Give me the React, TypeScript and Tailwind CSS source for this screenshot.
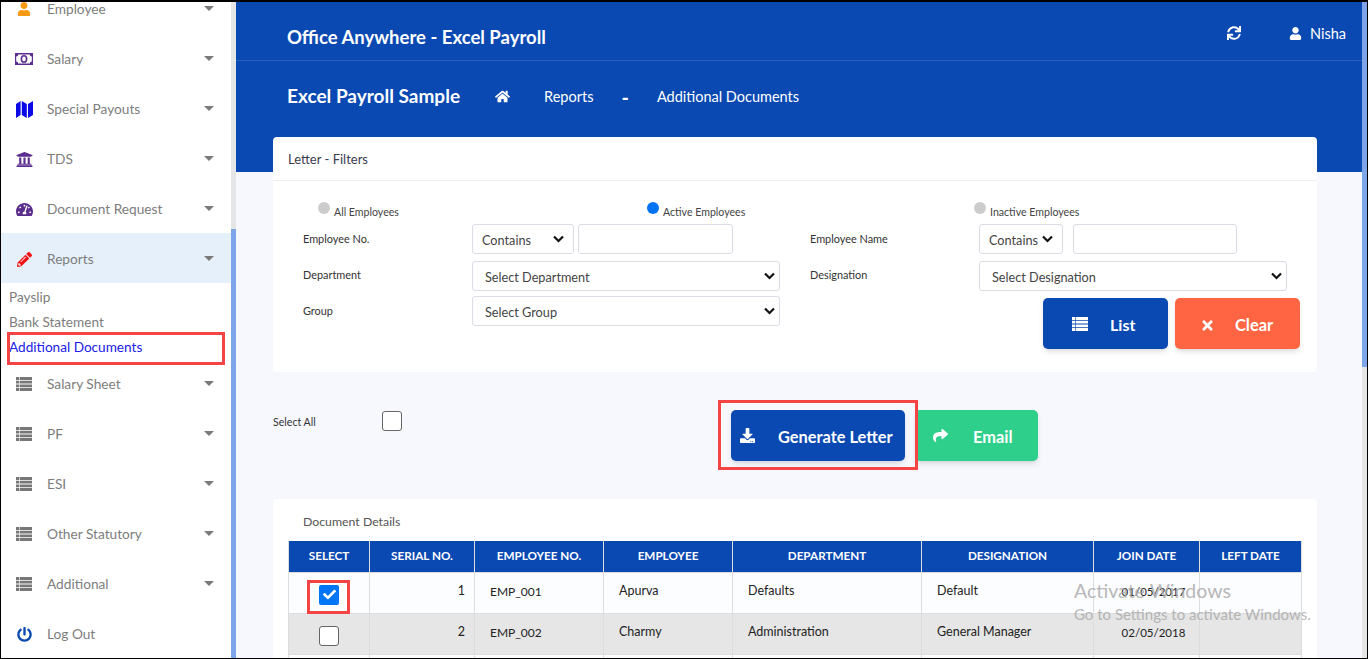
import { FaUser, FaUniversity, FaTachometerAlt, FaPencilAlt, FaPowerOff, FaHome, FaSync, FaTimes, FaDownload, FaShare, FaCheck } from 'react-icons/fa';
import type { ReactNode } from 'react';

function ListIcon({ className }: { className?: string }) {
  return (
    <svg className={className} viewBox="0 0 16 14" fill="currentColor" aria-hidden>
      <path d="M0 0h3.4v2.9H0zM4 0h12v2.9H4zM0 3.7h3.4v2.9H0zM4 3.7h12v2.9H4zM0 7.4h3.4v2.9H0zM4 7.4h12v2.9H4zM0 11.1h3.4V14H0zM4 11.1h12V14H4z" />
    </svg>
  );
}

function MoneyIcon() {
  return (
    <svg className="h-[12px] w-[18px] text-[#5b2d8e]" viewBox="0 0 18 12" aria-hidden>
      <path fill="currentColor" d="M0 0h18v12H0z" />
      <path fill="#fff" d="M3.2 1.6h11.6a2 2 0 002 2v4.8a2 2 0 00-2 2H3.2a2 2 0 00-2-2V3.6a2 2 0 002-2z" />
      <ellipse cx="9" cy="6" rx="2.6" ry="3.2" fill="none" stroke="currentColor" strokeWidth="1.6" />
    </svg>
  );
}

function MapIcon() {
  return (
    <svg className="h-[17px] w-[17px] text-[#0a0ae6]" viewBox="0 0 17 17" fill="currentColor" aria-hidden>
      <path d="M0 3l4.6-3v14L0 17zM5.8 0l5 3v14l-5-3zM12 3l5-3v14l-5 3z" />
    </svg>
  );
}

function NavItem({ icon, label, active, noCaret }: { icon: ReactNode; label: string; active?: boolean; noCaret?: boolean }) {
  return (
    <div className={`flex h-[50px] shrink-0 items-center ${active ? 'mt-[-1px] bg-[#e6f0fb] pt-[2px]' : ''}`}>
      <span className="flex w-[46px] shrink-0 justify-center text-[17px]">{icon}</span>
      <span className="text-[13.7px] text-[#7d7d7d]">{label}</span>
      {!noCaret && <span className="ml-auto mr-[17px] mb-[1px] h-0 w-0 border-x-[5px] border-t-[5px] border-x-transparent border-t-[#7a7a7a]" />}
    </div>
  );
}

const listIcon = <ListIcon className="w-[16px] text-[#777777]" />;

function Select({ label, className }: { label: string; className: string }) {
  return (
    <div className={`flex h-[30px] shrink-0 items-center justify-between rounded-[3px] border border-[#dcdce6] bg-white text-[12.7px] text-[#444444] ${className}`}>
      <span className="pt-[3px]">{label}</span>
      <svg className="h-[8px] w-[11px]" viewBox="0 0 11 8" fill="none" stroke="#111111" strokeWidth="2.2" aria-hidden><path d="M1 1.5l4.5 4.5L10 1.5" /></svg>
    </div>
  );
}

function Radio({ label, on, className }: { label: string; on?: boolean; className: string }) {
  return (
    <div className={`flex shrink-0 items-start gap-[4px] text-[10.6px] text-[#444444] ${className}`}>
      <span className={`h-[12px] w-[12px] rounded-full ${on ? 'bg-[#0073f5]' : 'bg-[#cccccc]'}`} />
      <span className="mt-[3px] leading-[14px]">{label}</span>
    </div>
  );
}

function FilterLabel({ text, className }: { text: string; className: string }) {
  return <div className={`shrink-0 text-[10.9px] text-[#333333] ${className}`}>{text}</div>;
}

const headers = [
  ['SELECT', 'w-[81px]'],
  ['SERIAL NO.', 'w-[105px]'],
  ['EMPLOYEE NO.', 'w-[129px]'],
  ['EMPLOYEE', 'w-[129px]'],
  ['DEPARTMENT', 'w-[189px]'],
  ['DESIGNATION', 'w-[172px]'],
  ['JOIN DATE', 'w-[106px]'],
  ['LEFT DATE', 'w-[102px]'],
];

const rows = [
  { serial: '1', no: 'EMP_001', name: 'Apurva', dept: 'Defaults', desig: 'Default', join: '01/05/2017', checked: true },
  { serial: '2', no: 'EMP_002', name: 'Charmy', dept: 'Administration', desig: 'General Manager', join: '02/05/2018', checked: false },
];

export default function App() {
  return (
    <div className="flex h-[659px] w-[1368px] overflow-hidden border-t-2 border-r border-b border-l border-black bg-[#f7f8fe] font-['Lato','Noto_Sans',sans-serif]">
      {/* sidebar */}
      <aside className="flex w-[235px] shrink-0 bg-white">
        <div className="relative h-full w-[230px] shrink-0 overflow-hidden">
          <div className="mt-[-18px] flex flex-col">
            <NavItem icon={<FaUser className="text-[14px] text-[#f59a12]" />} label="Employee" />
            <NavItem icon={<MoneyIcon />} label="Salary" />
            <NavItem icon={<MapIcon />} label="Special Payouts" />
            <NavItem icon={<FaUniversity className="text-[#5b2d8e]" />} label="TDS" />
            <NavItem icon={<FaTachometerAlt className="text-[#5b2d8e]" />} label="Document Request" />
            <NavItem icon={<FaPencilAlt className="text-[15px] text-[#f01414]" />} label="Reports" active />
            <div className="mb-[-1px] flex flex-col pl-[8px] pt-[2px] text-[13.6px] leading-[25px] text-[#7d7d7d]">
              <span>Payslip</span>
              <span>Bank Statement</span>
              <span className="relative text-[#2020e8]">
                Additional Documents
                <span className="absolute left-[-2px] top-[-3px] h-[33px] w-[218px] border-[3px] border-[#f44444]" />
              </span>
            </div>
            <NavItem icon={listIcon} label="Salary Sheet" />
            <NavItem icon={listIcon} label="PF" />
            <NavItem icon={listIcon} label="ESI" />
            <NavItem icon={listIcon} label="Other Statutory" />
            <NavItem icon={listIcon} label="Additional" />
            <NavItem icon={<FaPowerOff className="text-[15px] text-[#0a4ab0]" />} label="Log Out" noCaret />
          </div>
        </div>
        <div className="flex w-[5px] shrink-0 flex-col">
          <div className="h-[227px] bg-[#e6e6e6]" />
          <div className="flex-1 bg-[#7da5e8]" />
        </div>
      </aside>

      {/* main */}
      <main className="relative flex min-w-0 flex-1 flex-col overflow-hidden">
        <header className="h-[170px] shrink-0 bg-[#0a49b2] text-white">
          <div className="flex h-[59px] items-center border-b border-[#2a63b5] pl-[51px] pr-[16px]">
            <span className="mt-[14px] text-[18.5px] font-bold">Office Anywhere - Excel Payroll</span>
            <FaSync className="ml-auto mt-[4px] text-[14px]" />
            <FaUser className="ml-[48px] mt-[4px] text-[13px]" />
            <span className="ml-[8px] mt-[6px] text-[14.5px]">Nisha</span>
          </div>
          <div className="flex h-[71px] items-center pl-[51px]">
            <span className="text-[19px] font-bold">Excel Payroll Sample</span>
            <FaHome className="ml-[35px] text-[15px]" />
            <span className="ml-[34px] text-[14.5px]">Reports</span>
            <span className="ml-[28px] text-[20px] font-bold leading-none">-</span>
            <span className="ml-[28px] text-[14.5px]">Additional Documents</span>
          </div>
        </header>

        <div className="mt-[-35px] flex flex-col pl-[37px]">
          {/* filters card */}
          <section className="h-[235px] w-[1044px] rounded-[4px] bg-white">
            <div className="flex h-[44px] items-center border-b border-[#eeeeee] pl-[15px] pt-[3px] text-[13px] text-[#3c3c50]">Letter - Filters</div>
            <div className="flex h-[191px] flex-col px-[30px] pt-[21px]">
              <div className="flex h-[22px]">
                <Radio label="All Employees" className="w-[344px] pl-[15px]" />
                <Radio label="Active Employees" on className="w-[327px]" />
                <Radio label="Inactive Employees" className="" />
              </div>
              <div className="flex h-[30px] items-start">
                <FilterLabel text="Employee No." className="w-[169px] pt-[7px]" />
                <Select label="Contains" className="w-[102px] px-[9px]" />
                <div className="ml-[4px] h-[30px] w-[155px] shrink-0 rounded-[3px] border border-[#dcdce6] bg-white" />
                <FilterLabel text="Employee Name" className="ml-[77px] w-[169px] pt-[7px]" />
                <Select label="Contains" className="w-[84px] px-[9px]" />
                <div className="ml-[10px] h-[30px] w-[164px] shrink-0 rounded-[3px] border border-[#dcdce6] bg-white" />
              </div>
              <div className="mt-[7px] flex h-[30px] items-start">
                <FilterLabel text="Department" className="w-[169px] pt-[6px]" />
                <Select label="Select Department" className="w-[308px] pl-[12px] pr-[4px]" />
                <FilterLabel text="Designation" className="ml-[30px] w-[169px] pt-[6px]" />
                <Select label="Select Designation" className="w-[308px] pl-[12px] pr-[4px]" />
              </div>
              <div className="mt-[5px] flex items-start">
                <FilterLabel text="Group" className="w-[169px] pt-[7px]" />
                <Select label="Select Group" className="w-[308px] pl-[12px] pr-[4px]" />
                <button className="ml-[263px] mt-[2px] flex h-[51px] w-[125px] shrink-0 items-center rounded-[5px] bg-[#0a49b2] pl-[29px] text-[16px] font-bold text-white shadow-md">
                  <ListIcon className="w-[16px]" />
                  <span className="ml-[22px] pt-[2px]">List</span>
                </button>
                <button className="ml-[7px] mt-[2px] flex h-[51px] w-[125px] shrink-0 items-center rounded-[5px] bg-[#ff6542] pl-[25px] text-[16.4px] font-bold text-white shadow-md">
                  <FaTimes className="mt-[3px] text-[15px]" />
                  <span className="ml-[20px] pt-[3px]">Clear</span>
                </button>
              </div>
            </div>
          </section>

          {/* action row */}
          <div className="flex h-[127px] items-start pt-[38px]">
            <span className="mt-[5px] w-[109px] shrink-0 text-[10.6px] text-[#333333]">Select All</span>
            <span className="mt-[1px] h-[20px] w-[20px] shrink-0 rounded-[3px] border border-[#666666] bg-white" />
            <div className="relative ml-[329px] flex">
              <button className="flex h-[51px] w-[174px] items-center rounded-[5px] bg-[#0a49b2] pl-[9px] text-[16.4px] font-bold text-white shadow-md">
                <FaDownload className="text-[15px]" />
                <span className="ml-[23px] pt-[3px]">Generate Letter</span>
              </button>
              <span className="absolute left-[-13px] top-[-10px] h-[70px] w-[200px] border-[3px] border-[#f44444]" />
              <button className="ml-[10px] flex h-[51px] w-[123px] items-center rounded-[5px] bg-[#2ecf8b] pl-[18px] text-[16.4px] font-bold text-white shadow-md">
                <FaShare className="text-[15px]" />
                <span className="ml-[25px] pt-[3px]">Email</span>
              </button>
            </div>
          </div>

          {/* document details */}
          <section className="w-[1044px] rounded-t-[4px] bg-white pl-[15px]">
            <div className="flex h-[42px] items-center pl-[15px] pt-[4px] text-[12.3px] text-[#555555]">Document Details</div>
            <table className="w-[1013px] table-fixed border-collapse text-[12.5px] text-[#222222]">
              <thead>
                <tr className="h-[31px] bg-[#0a49b2] text-[11.7px] font-bold text-white">
                  {headers.map(([h, w]) => (
                    <th key={h} className={`border-x border-[#dddddd] text-center font-bold ${w}`}>{h}</th>
                  ))}
                </tr>
              </thead>
              <tbody>
                {rows.map((r) => (
                  <tr key={r.no} className={`h-[41px] ${r.checked ? 'bg-[#fcfdff]' : 'bg-[#e6e6e6]'}`}>
                    <td className="border border-[#dddddd] text-center">
                      <span className="relative top-[2px] inline-flex align-middle">
                        {r.checked ? (
                          <span className="flex h-[20px] w-[20px] items-center justify-center rounded-[2px] bg-[#0075f5] text-[13px] text-white">
                            <FaCheck />
                          </span>
                        ) : (
                          <span className="h-[20px] w-[20px] rounded-[3px] border border-[#666666] bg-white" />
                        )}
                        {r.checked && <span className="absolute left-[-12px] top-[-5px] h-[34px] w-[43px] border-[3px] border-[#f44444]" />}
                      </span>
                    </td>
                    <td className="border border-[#dddddd] pr-[9px] text-right align-middle"><span className="relative top-[-1px]">{r.serial}</span></td>
                    <td className="border border-[#dddddd] pl-[15px] text-[12px]"><span className="relative top-[-1px]">{r.no}</span></td>
                    <td className="border border-[#dddddd] pl-[15px]"><span className="relative top-[-1px]">{r.name}</span></td>
                    <td className="border border-[#dddddd] pl-[15px]"><span className="relative top-[-1px]">{r.dept}</span></td>
                    <td className="border border-[#dddddd] pl-[15px]"><span className="relative top-[-1px]">{r.desig}</span></td>
                    <td className="border border-[#dddddd] pl-[14px] text-center text-[11.5px]"><span className="relative top-[-1px]">{r.join}</span></td>
                    <td className="border border-[#dddddd]" />
                  </tr>
                ))}
                <tr className="h-[41px] bg-[#fcfdff]">
                  {headers.map(([h]) => <td key={h} className="border border-[#dddddd]" />)}
                </tr>
              </tbody>
            </table>
          </section>
        </div>

        {/* windows watermark */}
        <div className="pointer-events-none absolute left-[838px] top-[577px] text-[#a8a8a8] opacity-80">
          <div className="text-[19.5px] leading-[24px]">Activate Windows</div>
          <div className="whitespace-nowrap text-[15px] leading-[22px]">Go to Settings to activate Windows.</div>
        </div>
      </main>

      {/* page scrollbar */}
      <div className="flex w-[5px] shrink-0 flex-col">
        <div className="h-[365px] bg-[#7da5e8]" />
        <div className="flex-1 bg-[#e6e6e6]" />
      </div>
    </div>
  );
}
